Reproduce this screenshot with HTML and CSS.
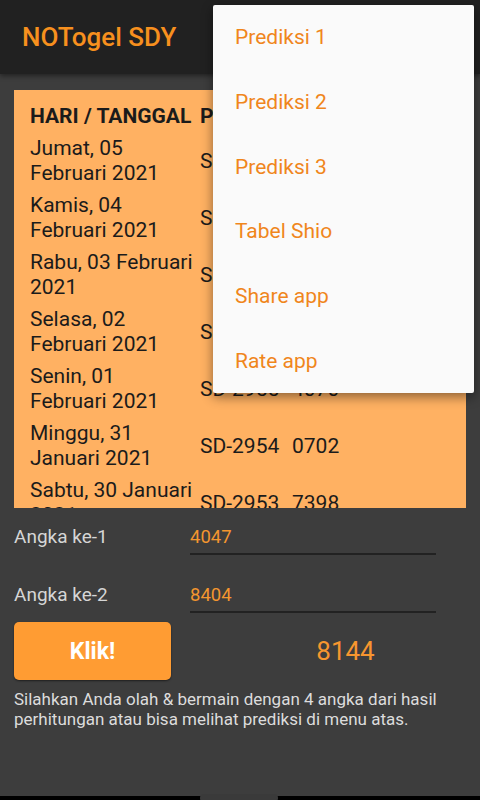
FILE: index.html
```html
<!DOCTYPE html>
<html lang="id">
  <head>
    <meta charset="UTF-8" />
    <meta name="viewport" content="width=device-width, initial-scale=1.0" />
    <title>NOTogel SDY</title>
    <link rel="stylesheet" href="styles.css">
  </head>
  <body>
    <div class="app">
      <header class="topbar">
        <h1 class="title">NOTogel SDY</h1>
      </header>

      <main class="content">
        <div class="table">
          <div class="row head">
            <div class="day">HARI / TANGGAL</div>
            <div class="period">PERIODE</div>
            <div class="result">RESULT</div>
          </div>
          <div class="row">
            <div class="day">Jumat, 05 Februari 2021</div>
            <div class="period">SD-2959</div>
            <div class="result">4047</div>
          </div>
          <div class="row">
            <div class="day">Kamis, 04 Februari 2021</div>
            <div class="period">SD-2958</div>
            <div class="result">8404</div>
          </div>
          <div class="row">
            <div class="day">Rabu, 03 Februari 2021</div>
            <div class="period">SD-2957</div>
            <div class="result">2815</div>
          </div>
          <div class="row">
            <div class="day">Selasa, 02 Februari 2021</div>
            <div class="period">SD-2956</div>
            <div class="result">9361</div>
          </div>
          <div class="row">
            <div class="day">Senin, 01 Februari 2021</div>
            <div class="period">SD-2955</div>
            <div class="result">4070</div>
          </div>
          <div class="row">
            <div class="day">Minggu, 31 Januari 2021</div>
            <div class="period">SD-2954</div>
            <div class="result">0702</div>
          </div>
          <div class="row">
            <div class="day">Sabtu, 30 Januari 2021</div>
            <div class="period">SD-2953</div>
            <div class="result">7398</div>
          </div>
        </div>

        <div class="field">
          <label class="label" for="angka1">Angka ke-1</label>
          <div class="input" id="angka1">4047</div>
        </div>
        <div class="field">
          <label class="label" for="angka2">Angka ke-2</label>
          <div class="input" id="angka2">8404</div>
        </div>

        <div class="action">
          <button class="btn">Klik!</button>
          <div class="total">8144</div>
        </div>

        <p class="note">Silahkan Anda olah &amp; bermain dengan 4 angka dari hasil perhitungan atau bisa melihat prediksi di menu atas.</p>
      </main>

      <div class="navbar"><span class="pill"></span></div>

      <ul class="menu">
        <li>Prediksi 1</li>
        <li>Prediksi 2</li>
        <li>Prediksi 3</li>
        <li>Tabel Shio</li>
        <li>Share app</li>
        <li>Rate app</li>
      </ul>
    </div>
  </body>
</html>
```

FILE: styles.css
```css
* {
  box-sizing: border-box;
}
body {
  margin: 0;
  font-family: Roboto, "Noto Sans", Arial, sans-serif;
  background: #3d3d3d;
}
.app {
  position: relative;
  width: 480px;
  height: 800px;
  overflow: hidden;
  display: flex;
  flex-direction: column;
}
.topbar {
  height: 74px;
  background: #212121;
  display: flex;
  align-items: center;
  padding-left: 22px;
  box-shadow: 0 2px 5px rgba(0, 0, 0, 0.45);
  position: relative;
  z-index: 1;
}
.title {
  margin: 0;
  font-size: 26px;
  font-weight: 500;
  color: #f7901e;
}
.content {
  flex: 1;
  padding: 16px 14px 0;
}
.table {
  height: 418px;
  overflow: hidden;
  background: #ffb162;
  padding: 8px 16px 0;
  color: #1b1b1b;
  font-size: 21px;
  line-height: 25px;
}
.row {
  display: flex;
  align-items: center;
  padding-top: 7px;
}
.row.head {
  padding-top: 6px;
  font-weight: 700;
  white-space: nowrap;
}
.day {
  width: 170px;
  flex-shrink: 0;
  padding-right: 5px;
}
.period {
  width: 92px;
  flex-shrink: 0;
}
.result {
  flex: 1;
}
.field {
  display: flex;
  align-items: flex-end;
  margin-top: 17px;
  height: 30px;
}
.field + .field {
  margin-top: 28px;
}
.label {
  width: 176px;
  font-size: 19px;
  line-height: 24px;
  color: #d6d6d6;
  align-self: flex-start;
}
.input {
  width: 246px;
  height: 30px;
  font-size: 18.5px;
  line-height: 24px;
  color: #f3962f;
  border-bottom: 2px solid #222;
}
.action {
  display: flex;
  align-items: center;
  margin-top: 9px;
}
.btn {
  width: 157px;
  height: 58px;
  border: none;
  border-radius: 5px;
  background: #ff9c33;
  color: #fff;
  font-family: inherit;
  font-size: 23px;
  font-weight: 700;
  box-shadow: 0 1px 2px rgba(0, 0, 0, 0.5);
}
.total {
  flex: 1;
  padding-left: 54px;
  text-align: center;
  font-size: 26px;
  color: #f7962f;
}
.note {
  margin: 9px 0 0;
  font-size: 17px;
  line-height: 20px;
  color: #dcdcdc;
}
.navbar {
  height: 4px;
  background: #000;
  position: relative;
}
.pill {
  position: absolute;
  left: 200px;
  top: -2px;
  width: 78px;
  height: 8px;
  border-radius: 4px;
  background: #3a3a3a;
}
.menu {
  position: absolute;
  top: 5px;
  left: 213px;
  width: 261px;
  margin: 0;
  padding: 0;
  list-style: none;
  background: #fafafa;
  border-radius: 2px;
  box-shadow: 0 4px 12px rgba(0, 0, 0, 0.45);
  z-index: 2;
}
.menu li {
  height: 64.7px;
  display: flex;
  align-items: center;
  padding-left: 22px;
  font-size: 21px;
  color: #f0861c;
}
```
